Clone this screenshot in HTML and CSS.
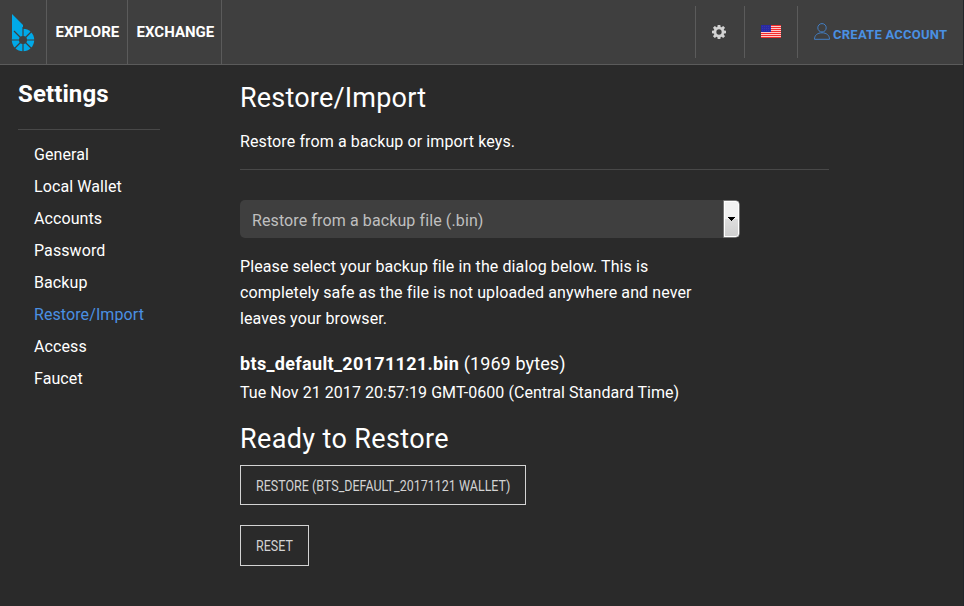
FILE: index.html
```html
<!DOCTYPE html>
<html lang="en">
<head>
<meta charset="utf-8">
<title>Settings</title>
<link rel="stylesheet" href="styles.css">
</head>
<body>
<header class="header">
  <a class="logo"><svg width="24" height="38" viewBox="0 0 24 38"><path fill="#00a9e8" d="M1 0 12 11V26H1z"/><circle cx="12" cy="26" r="11.2" fill="#00a9e8"/><path stroke="#3f3f3f" stroke-width="1.2" d="M12 13V38M0 26H24M3 17 21 35M21 17 3 35"/><circle cx="12" cy="26" r="4" fill="#3f3f3f"/><path fill="#3f3f3f" d="M12.5 11H13.2V14.8H12.5z"/></svg></a>
  <a class="nav explore"><span>EXPLORE</span></a>
  <a class="nav exchange"><span>EXCHANGE</span></a>
  <div class="tools">
    <div class="tool gear"><svg width="14" height="14" viewBox="-7 -7 14 14"><g fill="#d3d3d3"><g id="teeth"><path d="M-1.3-7.2H1.3L1.8-4H-1.8zM-1.3 7.2H1.3L1.8 4H-1.8zM-7.2-1.3V1.3L-4 1.8V-1.8zM7.2-1.3V1.3L4 1.8V-1.8z"/></g><use href="#teeth" transform="rotate(45)"/></g><circle r="3.9" fill="none" stroke="#d3d3d3" stroke-width="2.5"/></svg></div>
    <div class="tool flag"><svg width="20" height="13" viewBox="0 0 20 13"><path fill="#f22b2b" d="M0 0H20V13H0z"/><path stroke="#ffc9c9" d="M0 1.5H20M0 3.5H20M0 5.5H20M0 7.5H20M0 9.5H20M0 11.5H20"/><path fill="#2929a5" d="M0 0H10V7H0z"/><path stroke="#4545a8" stroke-width=".6" stroke-dasharray="1 1" d="M1 1.5H10M1 3.5H10M1 5.5H10"/></svg></div>
    <a class="tool account"><svg width="16" height="17" viewBox="0 0 16 17"><g fill="none" stroke="#437fc5" stroke-width="1"><circle cx="8" cy="4.8" r="4.2"/><path d="M.5 16.3C.5 12.2 3.5 9.8 8 9.8s7.5 2.4 7.5 6.5z"/></g></svg><span>CREATE ACCOUNT</span></a>
  </div>
</header>
<div class="page">
  <aside class="sidebar">
    <h3 class="side-title"><span>Settings</span></h3>
    <ul class="menu">
      <li>General</li><li>Local Wallet</li><li>Accounts</li><li>Password</li><li>Backup</li><li class="active">Restore/Import</li><li>Access</li><li>Faucet</li>
    </ul>
  </aside>
  <main class="content">
    <h2 class="title"><span>Restore/Import</span></h2>
    <p class="intro"><span>Restore from a backup or import keys.</span></p>
    <div class="select"><span class="value">Restore from a backup file (.bin)</span><span class="arrow"><svg width="7" height="4" viewBox="0 0 7 4" shape-rendering="crispEdges"><path d="M0 0H7V1H6V2H5V3H4V4H3V3H2V2H1V1H0z"/></svg></span></div>
    <p class="help"><span>Please select your backup file in the dialog below. This is<br>completely safe as the file is not uploaded anywhere and never<br>leaves your browser.</span></p>
    <p class="file"><b>bts_default_20171121.bin</b> <span>(1969 bytes)</span></p>
    <p class="date"><span>Tue Nov 21 2017 20:57:19 GMT-0600 (Central Standard Time)</span></p>
    <h2 class="ready"><span>Ready to Restore</span></h2>
    <div class="button restore"><span>RESTORE (BTS_DEFAULT_20171121 WALLET)</span></div>
    <div class="button reset"><span>RESET</span></div>
  </main>
</div>
</body>
</html>
```
FILE: styles.css
```css
* { box-sizing: border-box; }
body { margin: 0; height: 606px; overflow: hidden; background: #2a2a2a; color: #fff; font: 16px/26px Roboto, sans-serif; border-right: 1px solid #222529; }
h2, h3, p, ul { margin: 0; padding: 0; font-weight: 400; }
li { list-style: none; }
svg { display: block; flex: none; }
.header { height: 65px; display: flex; background: #3f3f3f; border-bottom: 1px solid #5b5b5b; }
.logo, .nav { border-right: 1px solid #5b5b5b; }
.logo { width: 47px; padding: 14px 0 0 11px; }
.nav { font-size: 15px; font-weight: 700; line-height: 64px; padding-left: 8.6px; white-space: nowrap; }
.explore { width: 81px; }
.exchange { width: 94px; }
.tools { margin-left: auto; padding-top: 6px; display: flex; }
.tool { height: 52px; border-left: 1px solid #5b5b5b; display: flex; }
.gear { width: 49px; padding: 19px 0 0 16px; }
.flag { width: 53px; padding: 19px 0 0 16px; }
.account { width: 166px; padding: 17px 0 0 16px; color: #4a90e2; font-size: 13px; font-weight: 700; letter-spacing: .25px; line-height: 24px; white-space: nowrap; }
.account span { margin-left: 3px; }
.page { display: flex; }
.sidebar { width: 240px; padding-left: 18px; }
.side-title { width: 142px; height: 65px; border-bottom: 1px solid #484848; font-size: 24px; font-weight: 700; line-height: 58px; letter-spacing: .1px; }
.menu { padding: 9px 0 0 16px; line-height: 32px; letter-spacing: .09px; }
.active { color: #4a90e2; }
.content { width: 589px; white-space: nowrap; letter-spacing: .11px; }
.title { font-size: 27px; line-height: 36px; padding-top: 15px; letter-spacing: .2px; }
.intro { height: 54px; padding-top: 13px; border-bottom: 1px solid #484848; }
.select { width: 500px; height: 38px; margin-top: 30px; background: #3f3f3f; border-radius: 5px; color: #bfbfbf; display: flex; justify-content: space-between; overflow: hidden; }
.value { padding: 8px 0 0 12px; }
.arrow { width: 17px; border: 1px solid #777; border-radius: 0 4px 4px 0; box-shadow: inset 0 0 0 1px #fff; background: linear-gradient(#f2f2f2 50%, #dedede 50%, #cfcfcf); padding: 16px 0 0 4px; }
.help { margin-top: 16px; }
.file { margin-top: 18px; font-size: 18px; line-height: 28px; }
.file b { letter-spacing: .33px; }
.date { margin-top: 2px; letter-spacing: .055px; }
.ready { font-size: 27px; line-height: 36px; margin-top: 15px; letter-spacing: .37px; }
.button { border: 1px solid #d3d3d3; color: #d3d3d3; font-size: 14px; height: 40px; line-height: 40px; padding-left: 15px; letter-spacing: 0; }
.button span { display: inline-block; transform: scaleX(.892); transform-origin: left; }
.restore { width: 286px; margin-top: 8px; }
.reset { width: 69px; height: 41px; line-height: 41px; margin-top: 20px; }
```
